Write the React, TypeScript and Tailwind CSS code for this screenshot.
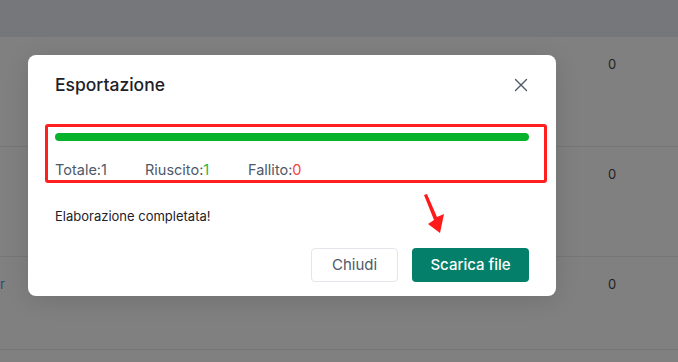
import React from 'react';
import { X } from 'lucide-react';

const rows = [
  { id: 1, left: '', h: 'h-[110px]' },
  { id: 2, left: '', h: 'h-[110px]' },
  { id: 3, left: 'r', h: 'h-[93px]' },
];

export default function App() {
  return (
    <div className="relative w-[678px] h-[362px] overflow-hidden bg-[#808080] font-['Inter','Noto_Sans',sans-serif]">
      {/* Dimmed table behind the dialog */}
      <div className="h-[37px] bg-[#76777b]" />
      {rows.map((r) => (
        <div key={r.id} className={`${r.h} flex border-b border-[#767676]`}>
          <div className="w-[20px] pt-[18px] text-[13px] text-[#1d4f7a]">{r.left}</div>
          <div className="flex-1" />
          <div className="w-[70px] pt-[18px] text-[13px] text-[#222]">0</div>
        </div>
      ))}

      {/* Dialog */}
      <div className="absolute left-[28px] top-[55px] w-[528px] h-[241px] rounded-lg bg-white shadow-[0_4px_24px_rgba(0,0,0,0.12)] px-[27px] pt-[18px] pb-[14px] flex flex-col">
        <div className="flex items-center justify-between h-[24px]">
          <h2 className="text-[17.5px] font-medium text-[#1d2129] leading-[24px]">Esportazione</h2>
          <button className="-mr-[3px] text-[#4e5969]">
            <X className="w-[22px] h-[22px]" strokeWidth={1.5} />
          </button>
        </div>

        <div className="relative mt-[36px]">
          <div className="h-[8px] w-full rounded-full bg-[#07b22d]" />
          <div className="mt-[19px] flex text-[14.5px] leading-[20px] text-[#4e5969]">
            <span className="w-[90px]">Totale:1</span>
            <span className="w-[103px]">
              Riuscito:<span className="text-[#1fb34a]">1</span>
            </span>
            <span>
              Fallito:<span className="text-[#f53f3f]">0</span>
            </span>
          </div>
          {/* annotation box */}
          <div className="absolute -left-[10px] -right-[18px] -top-[9px] -bottom-[3px] rounded-[3px] border-[3px] border-[#ff1f1f]" />
        </div>

        <p className="mt-[27px] text-[13px] leading-[18px] text-[#1d2129]">Elaborazione completata!</p>

        <div className="mt-[23px] flex justify-end gap-[14px]">
          <button className="w-[87px] h-[34px] rounded-[4px] border border-[#e5e6eb] text-[15px] text-[#4e5969]">
            Chiudi
          </button>
          <button className="w-[117px] h-[34px] rounded-[4px] bg-[#047f69] text-[15px] font-medium text-white">
            Scarica file
          </button>
        </div>
      </div>

      {/* annotation arrow */}
      <svg className="absolute left-[418px] top-[190px]" width="30" height="46" viewBox="0 0 30 46">
        <polygon points="6,5 9,4 19,27 26,24 22,43 10,34 16,30" fill="#ff1a1a" />
      </svg>
    </div>
  );
}
